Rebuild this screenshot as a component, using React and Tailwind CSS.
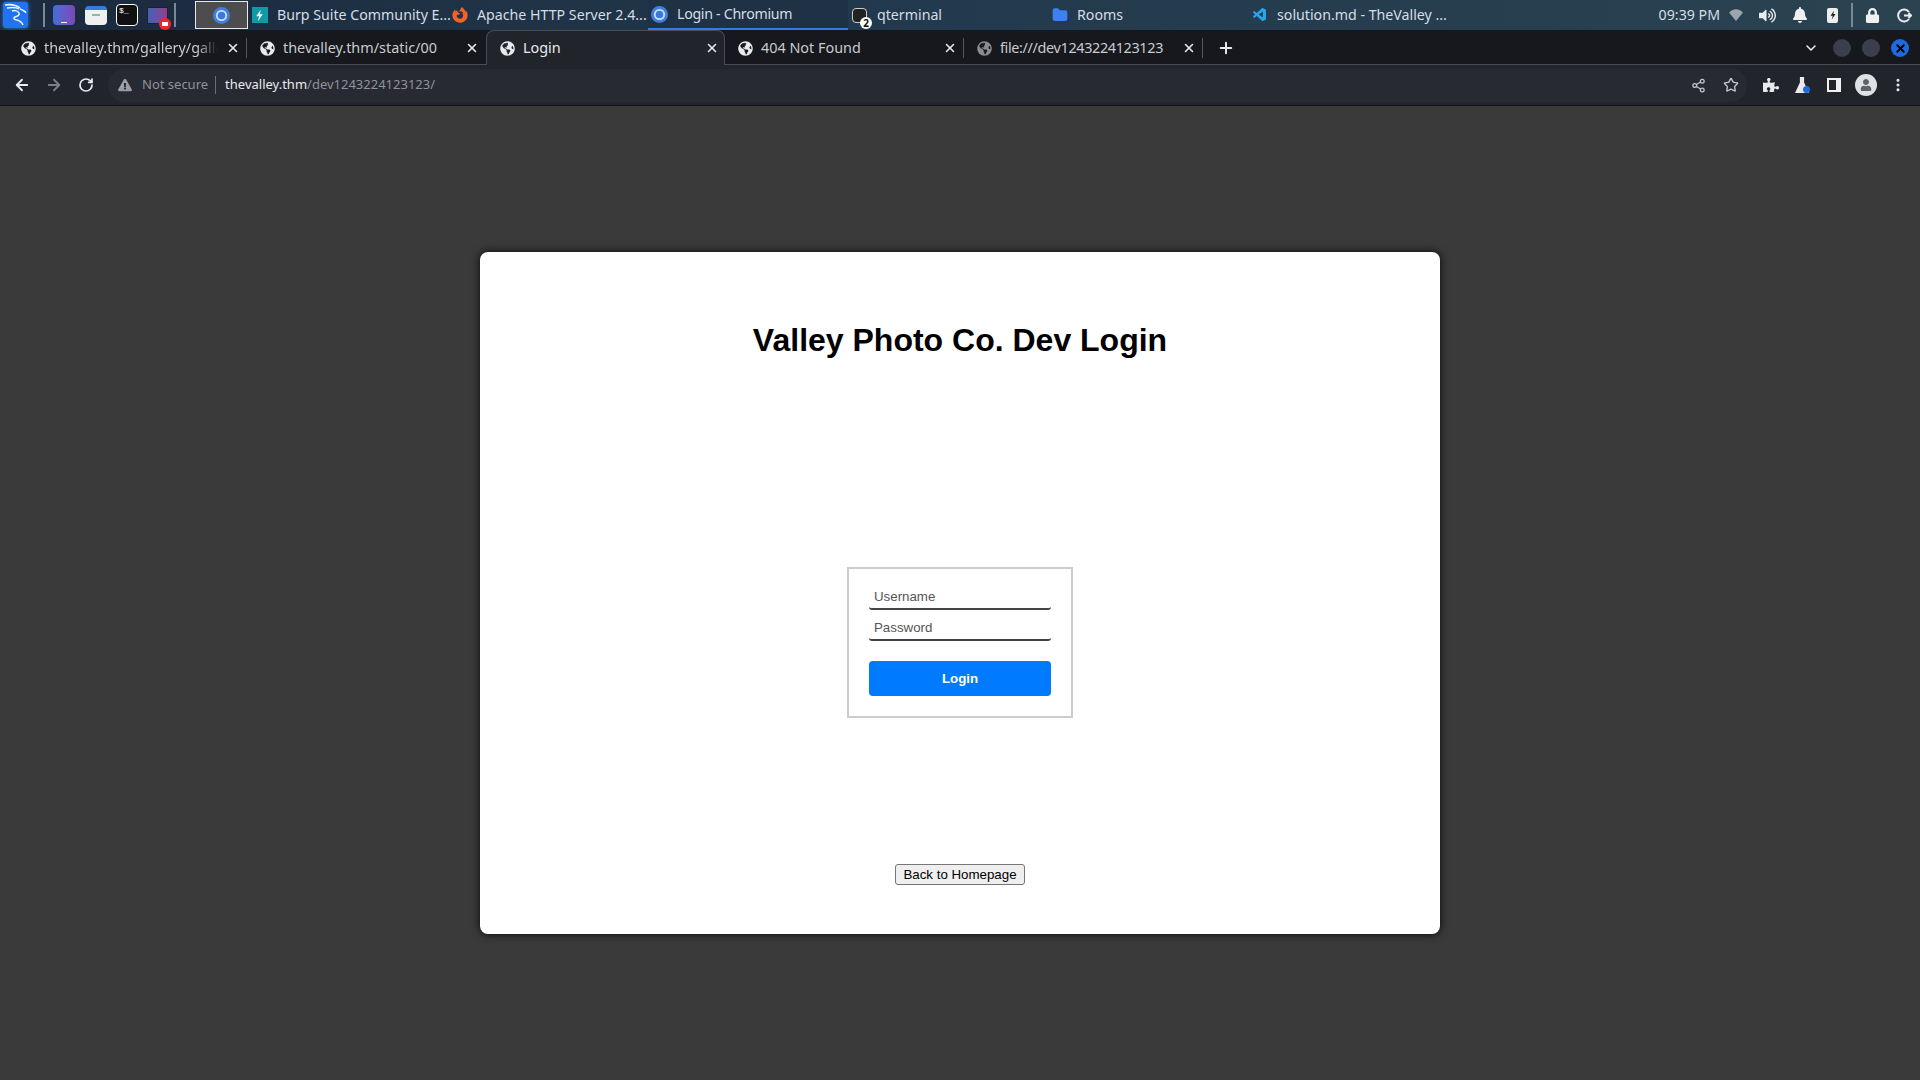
import React from "react";
import {
  ArrowLeft, ArrowRight, RotateCw, X, Plus, ChevronDown, Share2, Star, MoreVertical, Folder,
} from "lucide-react";
import {
  FaGlobeAmericas, FaFirefoxBrowser, FaUser, FaExclamationTriangle, FaLock, FaBell, FaVolumeUp, FaPuzzlePiece,
} from "react-icons/fa";
import { VscVscode } from "react-icons/vsc";

function Chromium() {
  return (
    <svg width="17" height="17" viewBox="0 0 17 17">
      <circle cx="8.5" cy="8.5" r="8.5" fill="#3f7fe0" />
      <circle cx="8.5" cy="8.5" r="5.6" fill="#cfe0f6" />
      <circle cx="8.5" cy="8.5" r="3.8" fill="#3a78dc" />
    </svg>
  );
}

function KaliLogo() {
  return (
    <div className="w-[25px] h-[26px] rounded-[3px] bg-[#2273f2] shadow-[0_0_4px_#2f7de8] flex items-center justify-center">
      <svg width="25" height="26" viewBox="0 0 25 26" fill="none" stroke="#eef4ff" strokeWidth="1.5">
        <path d="M2 3c6-1 11 0 15 3M4 6c5-1 9-1 12 1M9 9c3-1 6 0 7 2 1 2-1 3-4 4-2 1-1 3 2 3 3 1 5 2 6 5" />
        <path d="M17 7c3 1 5 2 6 4" />
      </svg>
    </div>
  );
}

function Bolt({ color, size }) {
  return (
    <svg width={size} height={size} viewBox="0 0 16 16">
      <path d="M9.5 1 4 9h3.5L6 15l6-8.5H8.5z" fill={color} />
    </svg>
  );
}

function Task({ icon, label, active }) {
  return (
    <div className={`w-[200px] h-[30px] flex items-center gap-[9px] pl-[3px] text-[14.2px] text-[#d5dde5] whitespace-nowrap ${active ? "bg-[#1e3145] border-b-2 border-[#2f7de8] tracking-[-0.3px]" : ""}`}>
      <span className="w-[17px] flex justify-center shrink-0">{icon}</span>
      <span>{label}</span>
    </div>
  );
}

function Tab({ label, active, dim, clip, sep, tight }) {
  return (
    <div className={`w-[239px] flex items-center pl-[13px] whitespace-nowrap text-[14.4px] ${active ? "h-[35px] -mb-px bg-[#22242c] rounded-t-lg border-t border-x border-[#4a4c52] text-[#e8eaed]" : "h-[34px] pt-[2px] text-[#c8cbd0]"} ${tight ? "tracking-[-0.35px]" : ""}`}>
      <FaGlobeAmericas size={15} className={`shrink-0 ${dim ? "text-[#8a8c90]" : "text-[#e8eaed]"}`} />
      <span className={`ml-[8px] w-[174px] overflow-hidden ${clip ? "[mask-image:linear-gradient(to_right,black_88%,transparent)]" : ""}`}>{label}</span>
      <X size={14} strokeWidth={2.6} className="ml-[8px] text-[#e8eaed] shrink-0" />
      {sep && <span className="ml-auto w-px h-[20px] bg-[#55575d]" />}
    </div>
  );
}

export default function App() {
  return (
    <div className="w-[1920px] h-[1080px] flex flex-col bg-[#3a3a3a] overflow-hidden font-['Noto_Sans',sans-serif]">
      {/* panel */}
      <div className="h-[30px] shrink-0 flex items-center bg-gradient-to-r from-[#1b2a3e] via-[#233a4e] to-[#2b4251]">
        <div className="ml-[3px] w-[36px]"><KaliLogo /></div>
        <div className="w-[2px] h-[24px] bg-[#7c8896] ml-[4px]" />
        <div className="ml-[8px] w-[22px] h-[20px] rounded-sm bg-gradient-to-r from-[#3f6ed8] to-[#7a48b8] flex items-end justify-center pb-[2px]">
          <span className="w-[6px] h-[1px] bg-white" />
        </div>
        <div className="ml-[10px] w-[22px] h-[19px] rounded-sm bg-[#f0f0f0] border-t-4 border-[#2f7de8] flex justify-center pt-[4px]">
          <span className="w-[8px] h-[2px] bg-[#aaa]" />
        </div>
        <div className="ml-[9px] w-[22px] h-[22px] rounded-sm bg-[#111] border border-white text-[8px] leading-[12px] pl-[2px] text-white font-['Liberation_Mono',monospace]">$_</div>
        <div className="ml-[9px] w-[21px] h-[17px] relative bg-gradient-to-r from-[#3f5fb8] to-[#8a3f90] border border-[#222]">
          <span className="absolute -right-[4px] -bottom-[7px] w-[12px] h-[12px] rounded-full bg-[#e8282e] flex items-center justify-center">
            <span className="w-[6px] h-[4px] bg-white" />
          </span>
        </div>
        <div className="w-[2px] h-[24px] bg-[#7c8896] ml-[6px]" />
        <div className="ml-[19px] w-[53px] h-[28px] bg-[#4d4d4d] border border-[#e8e8e8] flex items-center justify-center"><Chromium /></div>
        <Task label="Burp Suite Community E..." icon={<span className="w-[16px] h-[16px] bg-[#0f9aa8] flex items-center justify-center"><Bolt color="#fff" size={13} /></span>} />
        <Task label="Apache HTTP Server 2.4..." icon={<FaFirefoxBrowser size={16} className="text-[#f0642a]" />} />
        <Task label="Login - Chromium" active icon={<Chromium />} />
        <Task label="qterminal" icon={
          <span className="relative w-[15px] h-[15px] rounded-sm bg-[#222] border border-[#ccc]">
            <span className="absolute -right-[6px] -bottom-[7px] w-[12px] h-[12px] rounded-full bg-white text-[#111] text-[10px] leading-[12px] text-center font-bold">2</span>
          </span>
        } />
        <Task label="Rooms" icon={<Folder size={16} fill="#3b82f0" stroke="#3b82f0" />} />
        <Task label="solution.md - TheValley ..." icon={<VscVscode size={16} className="text-[#2aa3ee]" />} />
        <div className="ml-auto flex items-center text-[14.2px] text-[#d5dde5]">
          <span>09:39 PM</span>
          <svg width="14" height="12" viewBox="0 0 14 12" className="ml-[9px]">
            <path d="M0 3.5C4 -1 10 -1 14 3.5L7 12z" fill="#9aa5ad" />
          </svg>
          <FaVolumeUp size={17} className="ml-[16px] text-[#e8eaed]" />
          <FaBell size={16} className="ml-[16px] text-[#f0f0f0]" />
          <span className="ml-[19px] w-[11px] h-[15px] rounded-[2px] bg-[#eee] flex items-center justify-center"><Bolt color="#222" size={10} /></span>
          <span className="ml-[13px] w-[2px] h-[24px] bg-[#7c8896]" />
          <FaLock size={15} className="ml-[12px] text-[#f0f0f0]" />
          <svg width="15" height="15" viewBox="0 0 15 15" fill="none" stroke="#e8eaed" strokeWidth="2" className="ml-[17px] mr-[8px]">
            <path d="M12 4a6 6 0 1 0 0 7M7 7.5h7M11.5 5l2.5 2.5L11.5 10" />
          </svg>
        </div>
      </div>

      {/* tab strip */}
      <div className="h-[35px] shrink-0 flex items-end pl-[8px] bg-[#16181d] border-b border-[#4a4c52]">
        <Tab label="thevalley.thm/gallery/gallery" clip sep />
        <Tab label="thevalley.thm/static/00" />
        <Tab label="Login" active />
        <Tab label="404 Not Found" sep />
        <Tab label="file:///dev1243224123123" dim sep tight />
        <div className="h-[34px] pt-[2px] flex items-center"><Plus size={18} strokeWidth={2.6} className="ml-[14px] text-[#e8eaed]" /></div>
        <div className="ml-auto h-[34px] pt-[2px] flex items-center gap-[11px] pr-[11px]">
          <ChevronDown size={16} strokeWidth={2.4} className="mr-[3px] text-[#e8eaed]" />
          <span className="w-[18px] h-[18px] rounded-full bg-[#3a3f4c]" />
          <span className="w-[18px] h-[18px] rounded-full bg-[#3a3f4c]" />
          <span className="w-[18px] h-[18px] rounded-full bg-[#1f6ae0] flex items-center justify-center">
            <X size={13} strokeWidth={3.5} className="text-black" />
          </span>
        </div>
      </div>

      {/* toolbar */}
      <div className="h-[41px] shrink-0 flex items-center bg-[#22242c] border-b border-[#111] text-[#e8eaed]">
        <ArrowLeft size={18} strokeWidth={2.4} className="ml-[13px]" />
        <ArrowRight size={18} strokeWidth={2.4} className="ml-[14px] text-[#7c7f85]" />
        <RotateCw size={16} strokeWidth={2.6} className="ml-[15px]" />
        <div className="ml-[14px] w-[1639px] h-[33px] rounded-full bg-[#272933] flex items-center pl-[10px] pr-[8px]">
          <FaExclamationTriangle size={14} className="text-[#9a9da2]" />
          <span className="ml-[10px] text-[13px] text-[#8f9297]">Not secure</span>
          <span className="ml-[7px] w-px h-[18px] bg-[#6a6c72]" />
          <span className="ml-[9px] text-[13px] text-[#e8eaed]">thevalley.thm<span className="text-[#8f9297]">/dev1243224123123/</span></span>
          <Share2 size={15} className="ml-auto text-[#c4c7cc]" />
          <Star size={16} className="ml-[17px] text-[#c4c7cc]" />
        </div>
        <FaPuzzlePiece size={16} className="ml-[16px]" />
        <span className="ml-[16px] relative w-[14px] h-[16px]">
          <span className="block w-full h-full bg-[#e8eaed] [clip-path:polygon(35%_0,65%_0,65%_35%,100%_100%,0_100%,35%_35%)]" />
          <span className="absolute -right-[1px] bottom-0 w-[7px] h-[7px] rounded-full bg-[#1f6ae0]" />
        </span>
        <span className="ml-[18px] w-[14px] h-[14px] border-[2px] border-r-[5px] border-[#f0f0f0] bg-[#22242c]" />
        <span className="ml-[14px] w-[22px] h-[22px] rounded-full bg-[#dfe1e5] flex items-center justify-center overflow-hidden"><FaUser size={12} className="text-[#5f6368]" /></span>
        <MoreVertical size={16} strokeWidth={2.6} className="ml-[13px]" />
      </div>

      {/* page */}
      <div className="flex-1 flex flex-col items-center pt-[146px] font-['Liberation_Sans',sans-serif]">
        <div className="w-[960px] h-[682px] bg-white rounded-lg shadow-[0_0_8px_rgba(0,0,0,0.9)] flex flex-col items-center pt-[70px]">
          <h1 className="text-[32px] leading-[37px] font-bold text-black">Valley Photo Co. Dev Login</h1>
          <div className="mt-[208px] w-[226px] h-[151px] border-2 border-[#ccc] px-[20px] pt-[18px] flex flex-col">
            <div className="h-[23px] px-[5px] border-b-2 border-[#444] rounded-b-[3px] text-[13.3px] leading-[19px] text-[#555]">Username</div>
            <div className="mt-[8px] h-[23px] px-[5px] border-b-2 border-[#444] rounded-b-[3px] text-[13.3px] leading-[19px] text-[#555]">Password</div>
            <button className="mt-[20px] h-[35px] rounded-[4px] bg-[#007bff] text-white text-[13.3px] font-bold">Login</button>
          </div>
          <button className="mt-[146px] w-[130px] h-[21px] rounded-[3px] border border-[#767676] bg-[#efefef] text-[13.3px] leading-[19px] text-black">Back to Homepage</button>
        </div>
      </div>
    </div>
  );
}
